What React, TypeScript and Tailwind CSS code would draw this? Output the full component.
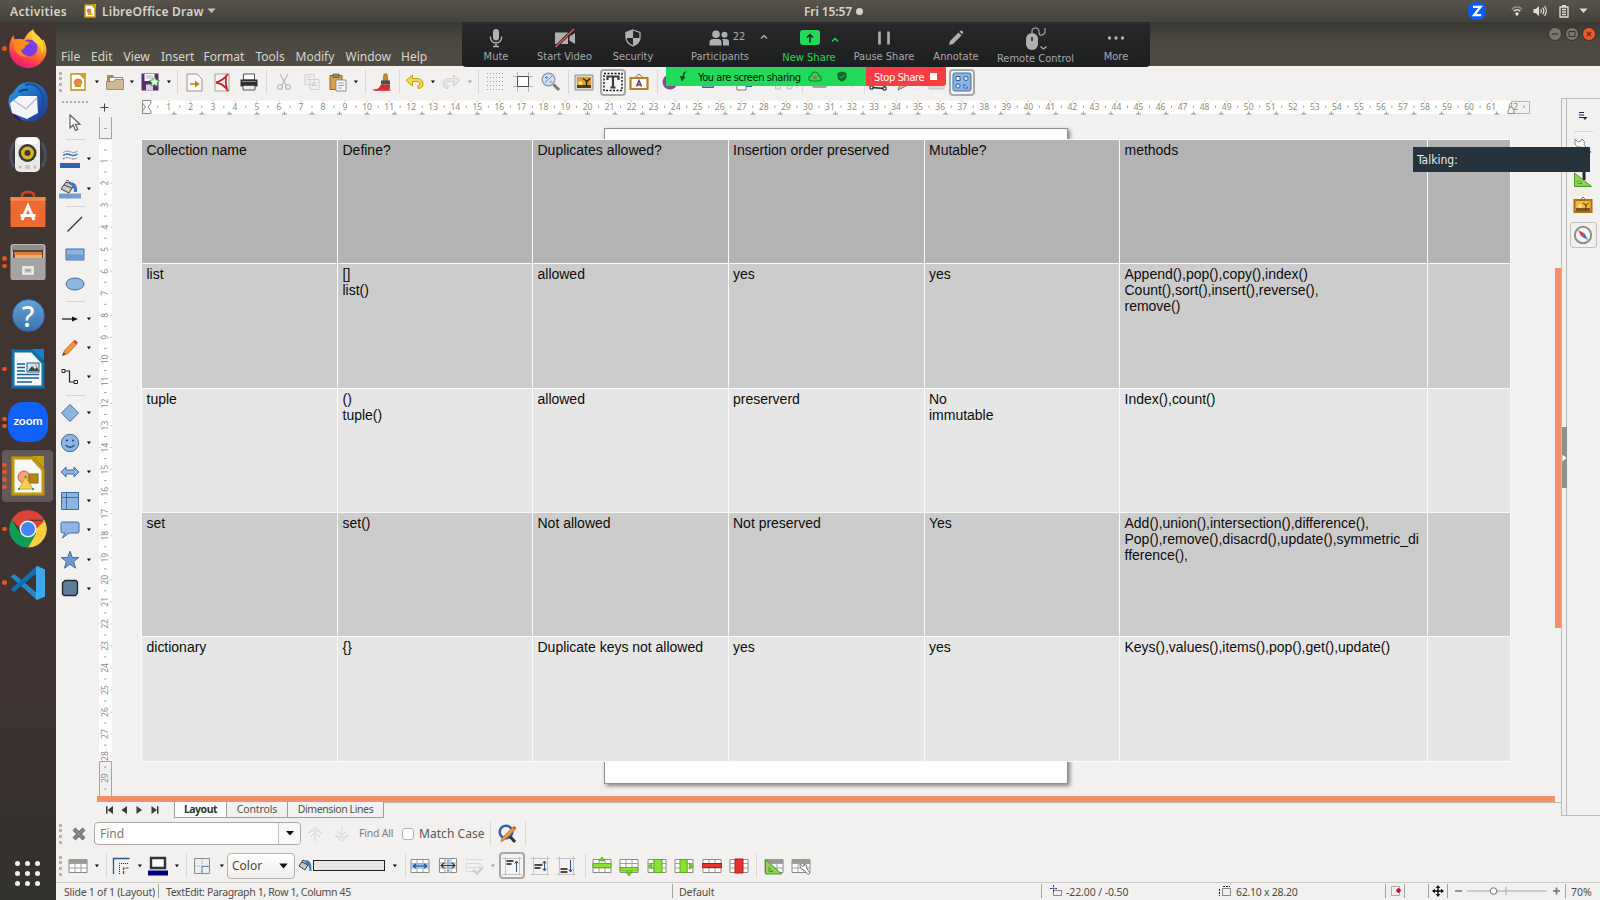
import type { ReactNode } from "react";

const UI = "font-['Noto_Sans',sans-serif]";
const DJ = "font-['DejaVu_Sans_Condensed','DejaVu_Sans',sans-serif]";

type IconProps = { w?: number; h?: number; vb?: string; children: ReactNode; className?: string };
function Ico({ w = 20, h = 20, vb, children, className = "" }: IconProps) {
  return (
    <svg width={w} height={h} viewBox={vb ?? `0 0 ${w} ${h}`} fill="none" className={`block shrink-0 ${className}`}>
      {children}
    </svg>
  );
}

function Slot({ w, children }: { w: string; children?: ReactNode }) {
  return <div className={`flex h-full shrink-0 items-center justify-center ${w}`}>{children}</div>;
}

function Caret({ c = "#111" }: { c?: string }) {
  return (
    <Ico w={6} h={4}>
      <path d="M0.8 0.6h4.2L2.9 3.2z" fill={c} />
    </Ico>
  );
}

function Sep({ h = "h-6" }: { h?: string }) {
  return <div className={`w-px shrink-0 bg-[#dbd9d6] ${h}`} />;
}

function Handle() {
  return <div className="h-5 w-0 border-l-[3px] border-dotted border-[#b5b3b0]" />;
}

/* ---------- top panel ---------- */

function TopPanel() {
  return (
    <header className={`flex h-[22px] shrink-0 items-center bg-linear-to-b from-[#58544c] to-[#42413b] text-[12px] font-semibold text-[#d8d4cb] ${UI}`}>
      <span className="ml-[10px] w-[74px] pt-px tracking-[0.35px]">Activities</span>
      <Ico w={12} h={14}>
        <path d="M1 1h7l3 3v9H1z" fill="#fff" stroke="#c9a000" strokeWidth="1.4" />
        <path d="M8 0h4v4z" fill="#d7ac00" />
        <circle cx="5" cy="7" r="2.4" fill="#e5794a" />
        <path d="M3 11l3-4 3 4z" fill="#d0a62a" />
      </Ico>
      <span className="ml-[6px] w-[103px] pt-px whitespace-nowrap tracking-[0.22px]">LibreOffice Draw</span>
      <Ico w={10} h={6} className="ml-[2px]">
        <path d="M0.5 0.5h8L4.5 5z" fill="#c8c5bd" />
      </Ico>
      <div className="ml-[587px] w-[51px] pt-px tracking-[-0.1px] whitespace-nowrap">Fri 15:57</div>
      <span className="ml-[1px] h-[7px] w-[7px] rounded-full bg-[#d5d2ca]" />
      <div className="ml-auto flex items-center">
        <div className="flex h-[18px] w-[18px] items-center justify-center rounded-[8px] bg-[#0b5cff]">
          <Ico w={12} h={12}>
            <path d="M2 1.8h7.6L3 10.2h7.2" stroke="#fff" strokeWidth="2.2" />
          </Ico>
        </div>
        <Ico w={12} h={12} className="ml-[25px]">
          <path d="M0.8 4.2a7.4 7.4 0 0 1 10.4 0" stroke="#928f88" strokeWidth="1.5" />
          <path d="M2.6 6.2a4.8 4.8 0 0 1 6.8 0" stroke="#dfdbd2" strokeWidth="1.4" />
          <path d="M4 8.2a3 3 0 0 1 4 0L6 11.6z" fill="#dfdbd2" />
        </Ico>
        <Ico w={15} h={12} className="ml-[10px]">
          <path d="M0.5 4h2.2L6 1v10L2.7 8H0.5z" fill="#dfdbd2" />
          <path d="M7.6 4q1.4 2 0 4M9.6 2.6q2.4 3.4 0 6.8M11.6 1.2q3.4 4.8 0 9.6" stroke="#dfdbd2" strokeWidth="1.2" />
        </Ico>
        <Ico w={10} h={14} className="ml-[11px]">
          <path d="M3 1.8h4M1 3h8v10H1z" stroke="#dfdbd2" strokeWidth="1.4" />
          <path d="M3 5.5h4M3 8h4M3 10.5h4" stroke="#dfdbd2" strokeWidth="1.4" />
        </Ico>
        <Ico w={9} h={6} className="ml-[10px] mr-[12px]">
          <path d="M0.5 0.5h8L4.5 5z" fill="#dfdbd2" />
        </Ico>
      </div>
    </header>
  );
}

/* ---------- dock ---------- */

const Firefox = (
  <Ico w={40} h={40}>
    <defs>
      <linearGradient id="ff" x1="0.8" y1="0" x2="0.3" y2="1">
        <stop offset="0" stopColor="#ffe23e" />
        <stop offset="0.4" stopColor="#ff9b24" />
        <stop offset="0.75" stopColor="#ff3c4a" />
        <stop offset="1" stopColor="#e31587" />
      </linearGradient>
    </defs>
    <path d="M25 0.5c1 4 6 6 9 11l1.5-1c4 8 4 14 0 20A18.5 18.5 0 0 1 1.5 23C0.5 17 2 11 5.5 6c0 2 0.5 3.5 1.5 4.5 3-1 6-0.5 9 0 2-4 5-8 9-10z" fill="url(#ff)" />
    <circle cx="21" cy="19" r="8.5" fill="#7a3ee0" />
    <path d="M6 11c4-2 8-1 11 1 2 1 4 1 5 1-1 2-4 3-5 4 0 3-2 3-4 4 1 4 5 6 8 6-9 3-17-4-15-16z" fill="#ff8a1f" />
    <path d="M25 0.5c1 4 6 6 9 11 2 5 2 10 0 14 0-6-3-11-8-13-3-3-3-8-1-12z" fill="#ffd23c" />
  </Ico>
);

const Thunderbird = (
  <Ico w={42} h={42}>
    <defs>
      <linearGradient id="tb" x1="0" y1="0" x2="1" y2="1">
        <stop offset="0" stopColor="#2fa4ea" />
        <stop offset="0.55" stopColor="#1c62b8" />
        <stop offset="1" stopColor="#2a2f86" />
      </linearGradient>
    </defs>
    <path d="M14 3c10-4 20-1 25 8 4 10 2 20-5 26-8 6-20 4-27-3C1 28 0 20 3 14c2-1 3-2 4-4 2-3 4-5 7-7z" fill="url(#tb)" />
    <path d="M3 22l9-7 18 0 1 17-11 6L5 32z" fill="#f4f5f8" />
    <path d="M6 19l13 9 11-11" stroke="#b4bac6" strokeWidth="1.3" />
    <path d="M6 33c3 1 6 3 9 7-5-1-8-4-9-7z" fill="#3a1160" />
    <path d="M18 4c7-2 12 1 15 5 4 6 4 14 1 22" stroke="#1a4c9c" strokeWidth="2" />
    <path d="M12 11q4-3 9-2" stroke="#173f86" strokeWidth="2" />
  </Ico>
);

const Rhythmbox = (
  <Ico w={42} h={40}>
    <path d="M7 8Q0 20 7 32M35 8q7 12 0 24" stroke="#4b566e" strokeWidth="3" opacity=".8" />
    <rect x="8" y="2" width="25" height="35" rx="5" fill="#e9e9e7" />
    <rect x="10" y="3" width="21" height="6" rx="3" fill="#fff" />
    <circle cx="20.5" cy="18" r="9" fill="#3a3a38" />
    <circle cx="20.5" cy="18" r="6.5" fill="#d8b520" />
    <circle cx="20.5" cy="18" r="3" fill="#3a3a38" />
    <rect x="18" y="30" width="5" height="4" rx="1" fill="#c9c9c7" />
    <circle cx="13" cy="32" r="1.5" fill="#bbb" />
    <circle cx="28" cy="32" r="1.5" fill="#bbb" />
  </Ico>
);

const Software = (
  <Ico w={36} h={38}>
    <path d="M12 10V6q0-4 6-4t6 4v4" stroke="#d5431a" strokeWidth="2.4" />
    <path d="M0.5 7h35v30h-35z" fill="#ee6a33" />
    <path d="M0.5 7h35v4h-35z" fill="#f68355" />
    <path d="M12 30l6-14 6 14M10.5 25.5h15" stroke="#fff" strokeWidth="3" />
  </Ico>
);

const Files = (
  <Ico w={36} h={38}>
    <rect x="0.5" y="1" width="35" height="36" rx="3" fill="#b9b8b6" />
    <rect x="2" y="2" width="32" height="7" rx="2" fill="#8f8e8b" />
    <rect x="3" y="7" width="30" height="9" fill="#4a4744" />
    <path d="M4 9h28v3H4z" fill="#e8792c" />
    <path d="M5 12h27v4H5z" fill="#f3b26b" />
    <path d="M1 15h34v20q0 2-2 2H3q-2 0-2-2z" fill="#a5a4a2" />
    <rect x="13" y="24" width="10" height="7" fill="#d5d4d2" stroke="#f3f3f3" strokeWidth="1.5" />
    <rect x="15.5" y="26.5" width="5" height="2" fill="#999" />
  </Ico>
);

const HelpIcon = (
  <div className="flex h-[33px] w-[33px] items-center justify-center rounded-full border border-[#2f6ba5] bg-linear-to-b from-[#66a3da] to-[#3873ad] font-['Noto_Sans',sans-serif] text-[28px] leading-none font-medium text-white">
    ?
  </div>
);

const Writer = (
  <Ico w={34} h={40}>
    <path d="M2 2h19l11 12v24H2z" fill="#f7f7f7" stroke="#0d71ab" strokeWidth="3" />
    <path d="M21 0h12v12z" fill="#0e85c8" />
    <path d="M6 15h8M6 18.5h8M6 22h8M6 25.5h22M6 29h22M6 33h15" stroke="#14639c" strokeWidth="1.6" />
    <rect x="16" y="14" width="12" height="9" fill="#cfe9fb" stroke="#14639c" />
    <path d="M17 22l4-5 3 3 2-2 2 4z" fill="#3c4a3a" />
    <circle cx="25" cy="16.5" r="1.3" fill="#f2b632" />
  </Ico>
);

const ZoomIcon = (
  <div className="flex h-10 w-10 items-center justify-center rounded-[15px] bg-[#1060fa] pb-[2px] font-['Lato',sans-serif] text-[12px] font-bold text-white">
    zoom
  </div>
);

const DrawIcon = (
  <Ico w={34} h={40}>
    <path d="M2 2h19l11 12v24H2z" fill="#f7f7f7" stroke="#c19a0b" strokeWidth="3" />
    <path d="M21 0h12v12z" fill="#c79e00" />
    <circle cx="13" cy="21" r="6" fill="#f2a27c" stroke="#c9643a" />
    <rect x="18" y="18" width="9" height="9" fill="#b08a18" stroke="#86690c" />
    <path d="M8 33l6.5-12L22 33z" fill="#f6cf57" stroke="#d0a62a" />
    <path d="M7 32h2v2H7zM21 32h2v2h-2zM13.5 20h2v2h-2z" fill="#2fae2f" />
  </Ico>
);

const Chrome = (
  <Ico w={38} h={38}>
    <path d="M19 19L2.8 9.7A18.6 18.6 0 0 1 35.2 9.7H19z" fill="#db4437" />
    <path d="M19 19L35.2 9.7A18.6 18.6 0 0 1 19 37.6L27 23z" fill="#ffcd40" />
    <path d="M19 19L27 23.6 19 37.6A18.6 18.6 0 0 1 2.8 9.7L11 23.6z" fill="#0f9d58" />
    <path d="M2.8 9.7L19 10.7H35.6L27 19H11z" fill="#db4437" />
    <circle cx="19" cy="19" r="8.5" fill="#f1f1f1" />
    <circle cx="19" cy="19" r="7" fill="#4285f4" />
  </Ico>
);

const VSCode = (
  <Ico w={36} h={36}>
    <path d="M0.5 11.5L4 9l23 19v7z" fill="#2489ca" />
    <path d="M0.5 24.5L4 27 27 8V1z" fill="#1070b3" />
    <path d="M27 1l8 3.500v27L27 35l-1-1V2z" fill="#3ca9ec" />
    <path d="M26 10v16L16 18z" fill="#3f3433" />
  </Ico>
);

const dock: { icon: ReactNode; dots: number; active?: boolean }[] = [
  { icon: Firefox, dots: 1 },
  { icon: Thunderbird, dots: 0 },
  { icon: Rhythmbox, dots: 0 },
  { icon: Software, dots: 0 },
  { icon: Files, dots: 2 },
  { icon: HelpIcon, dots: 0 },
  { icon: Writer, dots: 1 },
  { icon: ZoomIcon, dots: 2 },
  { icon: DrawIcon, dots: 4, active: true },
  { icon: Chrome, dots: 1 },
  { icon: VSCode, dots: 1 },
];

function Dock() {
  return (
    <aside className="flex w-14 shrink-0 flex-col bg-linear-to-b from-[#413632] via-[#3f3331] via-75% to-[#33322d]">
      {dock.map((d, i) => (
        <div key={i} className="flex h-[53.4px] shrink-0 items-center pl-[2px]">
          <div className={`flex h-[52px] w-[51px] items-center rounded-[4px] ${d.active ? "bg-[#64595a]" : ""}`}>
            <div className="flex w-[5px] flex-col items-center gap-[3px]">
              {Array.from({ length: d.dots }, (_, k) => (
                <span key={k} className="h-[4.4px] w-[4.4px] rounded-full bg-[#e95420]" />
              ))}
            </div>
            <div className="flex w-[42px] justify-center">{d.icon}</div>
          </div>
        </div>
      ))}
      <div className="mt-auto mb-[14px] ml-[15px] grid w-[25px] grid-cols-3 gap-[5px]">
        {Array.from({ length: 9 }, (_, k) => (
          <span key={k} className="h-[5px] w-[5px] rounded-full bg-[#f3f3f1]" />
        ))}
      </div>
    </aside>
  );
}

/* ---------- window chrome ---------- */

function MenuBar() {
  return (
    <div className="flex h-11 shrink-0 bg-linear-to-b from-[#393833] via-[#4b4841] via-45% to-[#504c44]">
      <nav className={`mt-[26px] flex h-[18px] items-center pl-[5px] text-[12px] text-[#dad6cd] ${UI}`}>
        <span className="w-[30px]">File</span>
        <span className="w-[32.5px]">Edit</span>
        <span className="w-[37.5px]">View</span>
        <span className="w-[42.5px]">Insert</span>
        <span className="w-[52px]">Format</span>
        <span className="w-[40px]">Tools</span>
        <span className="w-[50px]">Modify</span>
        <span className="w-[55.5px]">Window</span>
        <span>Help</span>
      </nav>
      <div className="mt-[5px] mr-[4px] ml-auto flex h-[14px] gap-[3px]">
        <Ico w={14} h={14}>
          <circle cx="7" cy="7" r="6.5" fill="#79766e" stroke="#35332e" />
          <path d="M4 7h6" stroke="#35332e" strokeWidth="1.2" />
        </Ico>
        <Ico w={14} h={14}>
          <circle cx="7" cy="7" r="6.5" fill="#79766e" stroke="#35332e" />
          <path d="M4 4.5h6v5H4z" stroke="#35332e" />
        </Ico>
        <Ico w={14} h={14}>
          <circle cx="7" cy="7" r="6.5" fill="#ee5a2b" stroke="#4a2a1c" />
          <path d="M4.8 4.8l4.4 4.4M9.2 4.8L4.8 9.2" stroke="#5a2410" strokeWidth="1.2" />
        </Ico>
      </div>
    </div>
  );
}

function ToggleBox({ children }: { children: ReactNode }) {
  return (
    <div className="flex h-[27px] w-[26px] shrink-0 items-center justify-center rounded-[4px] border-2 border-[#aaa8a5] bg-[#f6f5f4]">
      {children}
    </div>
  );
}

const disabled = "#d2d0cd";

function Toolbar() {
  return (
    <div className="flex h-8 shrink-0 items-center bg-[#f2f1f0]">
      <Slot w="w-2"><Handle /></Slot>
      <Slot w="w-7">
        <Ico w={16} h={18}>
          <path d="M1 1h9l5 5v11H1z" fill="#fff" stroke="#b98e00" strokeWidth="1.3" />
          <path d="M10 0h6v6z" fill="#cda200" />
          <circle cx="8" cy="9.5" r="3.6" fill="#e8834a" stroke="#b9612d" strokeWidth=".7" />
          <path d="M4 14l7-6v6z" fill="#c79e25" />
        </Ico>
      </Slot>
      <Slot w="w-2.5"><Caret /></Slot>
      <Slot w="w-[25px]">
        <Ico w={18} h={18}>
          <path d="M1 2h6l1 2h9v12H1z" fill="#a08c6c" />
          <path d="M4 5h12v5H4z" fill="#f5f5f5" />
          <path d="M0.5 8.5h7l1.5-2h8.5v10h-17z" fill="#cdb995" stroke="#92805f" strokeWidth=".8" />
        </Ico>
      </Slot>
      <Slot w="w-2.5"><Caret /></Slot>
      <Slot w="w-[27px]">
        <Ico w={20} h={18}>
          <path d="M0.5 0.5h17v17h-17z" fill="#5b2f6f" />
          <path d="M3.5 1h10v7h-10z" fill="#fff" />
          <path d="M5 3h7M5 5h7" stroke="#aaa" />
          <path d="M5 11.5h7v6H5z" fill="#d8d3dc" />
          <path d="M13.5 4l1.6 2.9 3.3.6-2.3 2.3.5 3.3-3.1-1.4-3 1.4.4-3.300-2.300-2.300 3.300-.6z" fill="#e9fbe6" stroke="#35b24a" />
        </Ico>
      </Slot>
      <Slot w="w-2.5"><Caret /></Slot>
      <Slot w="w-1.5"><Sep /></Slot>
      <Slot w="w-7">
        <Ico w={17} h={19}>
          <path d="M1 1h10l5 5v12H1z" fill="#f7f7f6" stroke="#989693" />
          <path d="M4 10.2h5V7.500l4.500 3.500L9 14.500v-2.700H4z" fill="#c17d11" />
        </Ico>
      </Slot>
      <Slot w="w-[27px]">
        <Ico w={16} h={19}>
          <path d="M1 1h14v17H1z" fill="#f7f7f6" stroke="#a5a3a0" />
          <path d="M14 1Q10 7 2 9.5 10 11 14 18M12 3q-1 7 1 13" stroke="#cc1f2b" strokeWidth="1.8" />
        </Ico>
      </Slot>
      <Slot w="w-7">
        <Ico w={18} h={18}>
          <path d="M3.5 1h11v6h-11z" fill="#fff" stroke="#555" />
          <path d="M0.5 6.5h17v7h-17z" fill="#2e3030" />
          <path d="M3 12.5h12v4.5H3z" fill="#ececec" stroke="#555" />
          <path d="M2 8.5h14" stroke="#8a8a8a" />
        </Ico>
      </Slot>
      <Slot w="w-[7px]"><Sep /></Slot>
      <Slot w="w-7">
        <Ico w={16} h={18}>
          <path d="M4 1l6 11M12 1L6 12" stroke="#bdbbb8" strokeWidth="1.3" />
          <circle cx="4" cy="14" r="2.4" stroke="#bdbbb8" strokeWidth="1.4" />
          <circle cx="12" cy="14" r="2.4" stroke="#bdbbb8" strokeWidth="1.4" />
        </Ico>
      </Slot>
      <Slot w="w-[27px]">
        <Ico w={16} h={18}>
          <path d="M1 1.5h9v10H1zM6 6.5h9v10H6z" fill="#f2f1f0" stroke={disabled} />
          <path d="M3 4h5M3 6.5h5M8 10h5M8 12.5h5" stroke={disabled} />
        </Ico>
      </Slot>
      <Slot w="w-[26px]">
        <Ico w={18} h={19}>
          <path d="M1 2.5h12v14H1z" fill="#d9a04a" stroke="#9a6518" />
          <path d="M4 1h6v3.5H4z" fill="#888a85" stroke="#555" strokeWidth=".7" />
          <path d="M7 7h10v11H7z" fill="#fafafa" stroke="#8b8b88" />
          <path d="M9 10h6M9 12.5h6M9 15h4" stroke="#9a9a98" />
        </Ico>
      </Slot>
      <Slot w="w-2.5"><Caret /></Slot>
      <Slot w="w-2"><Sep /></Slot>
      <Slot w="w-[26px]">
        <Ico w={19} h={19}>
          <path d="M11 1h3l1 7h-5z" fill="#c58a35" stroke="#8f5902" strokeWidth=".6" />
          <path d="M8 7.5h9v4H8z" fill="#4d4d4b" />
          <path d="M8 11.5h9v3l-1 3H1q5-1.5 7-6z" fill="#cf2c2c" />
          <path d="M0.5 17h17" stroke="#e03a3a" strokeWidth="1.6" />
        </Ico>
      </Slot>
      <Slot w="w-[9px]"><Sep /></Slot>
      <Slot w="w-6">
        <Ico w={19} h={16} className="-ml-1">
          <path d="M1 6.5L7.5 1v3.5H12c4 0 6 2.5 6 5.5s-2 4.500-5 4.500v-3c1.500 0 2-.7 2-1.700 0-1.300-1-2.300-3-2.300H7.500V12z" fill="#f0d65a" stroke="#c4a000" />
        </Ico>
      </Slot>
      <Slot w="w-2.5"><Caret /></Slot>
      <Slot w="w-[27px]">
        <Ico w={19} h={16}>
          <path d="M18 6.5L11.5 1v3.5H7c-4 0-6 2.5-6 5.5s2 4.500 5 4.500v-3c-1.500 0-2-.7-2-1.700 0-1.300 1-2.300 3-2.300h4.500V12z" fill="#e6e5e3" stroke="#d3d1ce" />
        </Ico>
      </Slot>
      <Slot w="w-2.5"><Caret c="#a5a3a0" /></Slot>
      <Slot w="w-[7px]"><Sep /></Slot>
      <Slot w="w-[27px]">
        <Ico w={20} h={20}>
          {[1, 5, 9, 13, 17].map((y) => (
            <path key={y} d={`M1 ${y + 0.5}h18`} stroke="#a3a19e" strokeDasharray="1 2" />
          ))}
        </Ico>
      </Slot>
      <Slot w="w-7">
        <Ico w={20} h={20}>
          <path d="M4.5 0v20M15.5 0v20M0 4.5h20M0 14.5h20" stroke="#a9bbd0" />
          <path d="M4.5 4.5h11v10h-11z" fill="#fff" stroke="#4c4c4c" />
        </Ico>
      </Slot>
      <Slot w="w-7">
        <Ico w={20} h={20}>
          <circle cx="7.5" cy="7.5" r="6.3" fill="#d5e1ef" stroke="#8c9db4" strokeWidth="1.4" />
          <path d="M4 10.5L11 4M5.5 4v3M4 5.5h3M8.5 10h3" stroke="#6b89b0" />
          <path d="M12.5 12.5l5.5 5.5" stroke="#7a7977" strokeWidth="3" />
        </Ico>
      </Slot>
      <Slot w="w-[7px]"><Sep /></Slot>
      <Slot w="w-[27px]">
        <Ico w={20} h={17} className="-ml-1">
          <path d="M1 1h18v15H1z" fill="#d8d7d4" stroke="#8f8e8b" />
          <path d="M3 3h14v11H3z" fill="#e59a2e" />
          <path d="M3 11h14v3H3z" fill="#5a3a18" />
          <path d="M12.5 13V7L9 4.500M12.500 8L16 4.500" stroke="#2a1c0c" strokeWidth="1.4" />
          <circle cx="6.5" cy="9" r="2" fill="#ffe98a" />
        </Ico>
      </Slot>
      <Slot w="w-7">
        <ToggleBox>
          <Ico w={20} h={20}>
            <path d="M1 1.5h18v17H1z" stroke="#111" strokeWidth="1.4" strokeDasharray="2 1.5" />
            <path d="M4.5 8V4.5h11V8M10 4.5V15.5M7.5 15.5h5" stroke="#3c3c3a" strokeWidth="2.2" />
          </Ico>
        </ToggleBox>
      </Slot>
      <Slot w="w-[27px]">
        <Ico w={20} h={18} className="-ml-1">
          <path d="M6 4.5l4-3.5 4 3.5" stroke="#777" />
          <path d="M1.5 5h17v11h-17z" fill="#fbfaf7" stroke="#c07f1e" strokeWidth="2.2" />
          <path d="M7.5 13.5l2.5-6 2.5 6M8.2 11.8h3.6" stroke="#5c3566" strokeWidth="1.4" />
        </Ico>
      </Slot>
      <Slot w="w-1.5"><Sep /></Slot>
      <Slot w="w-[23px]">
        <Ico w={18} h={18} className="-ml-1">
          <circle cx="9" cy="9" r="7.5" fill="#8a4a96" />
        </Ico>
      </Slot>
      <Slot w="w-[50px]">
        <Ico w={12} h={14}><path d="M0.5 2h11v10.5H0.5z" fill="#7ba3d6" stroke="#3465a4" /></Ico>
      </Slot>
      <Slot w="w-[22px]">
        <Ico w={17} h={18}>
          <path d="M4 1h12v13H4z" fill="#3465a4" />
          <path d="M1 7h9v10H1z" fill="#fff" stroke="#777" />
        </Ico>
      </Slot>
      <Slot w="w-[43px] pl-[14px]">
        <Ico w={18} h={16}><path d="M0.5 4h5v11h-5zM12 4h5v11h-5z" fill="#e5e4e2" stroke="#c3c1be" /></Ico>
      </Slot>
      <Slot w="w-[9px]"><Sep /></Slot>
      <Slot w="w-[25px]">
        <Ico w={16} h={14}><rect y="2" width="15" height="11" rx="2" fill="#a5a3a0" /></Ico>
      </Slot>
      <Slot w="w-[28px] pl-[12px]">
        <Ico w={10} h={16}><path d="M1 8h8l-4 6z" fill="#dddbd8" /></Ico>
      </Slot>
      <Slot w="w-[8px]"><Sep /></Slot>
      <Slot w="w-[20px]">
        <Ico w={18} h={20}>
          <path d="M2 15.5l14 1M3 3l-1 13M14 4l2 13" stroke="#222" strokeWidth="1.3" />
          <path d="M1 14h3v3H1zM14 15h3v3h-3z" fill="#fff" stroke="#111" />
        </Ico>
      </Slot>
      <Slot w="w-[30px]">
        <Ico w={12} h={20}><path d="M1 18L4 10l7-4v7z" fill="#e2c35a" stroke="#777" /></Ico>
      </Slot>
      <Slot w="w-[31px] pl-[5px]">
        <Ico w={17} h={18}><path d="M1 3h15v13H1z" fill="#dcdbd9" stroke="#c3c1be" /></Ico>
      </Slot>
      <ToggleBox>
        <Ico w={20} h={20}>
          <rect x="1" y="1" width="18" height="18" rx="2" fill="#8cb3e2" stroke="#3f6fae" />
          <path d="M4 4.5h4v4H4zM12 12l4 4h-4z" fill="#e8f0fa" stroke="#2f5f9f" />
          <circle cx="14" cy="6.5" r="2.1" fill="#dce8f6" stroke="#2f5f9f" />
          <circle cx="6" cy="14" r="2.1" fill="#dce8f6" stroke="#2f5f9f" />
        </Ico>
      </ToggleBox>
    </div>
  );
}

/* ---------- drawing tools ---------- */

function Tool({ h = "h-[29px]", caret = true, children }: { h?: string; caret?: boolean; children: ReactNode }) {
  return (
    <div className={`flex w-full shrink-0 items-center ${h}`}>
      {caret ? (
        <>
          <div className="flex w-7 justify-center">{children}</div>
          <div className="flex w-[9px] justify-center"><Caret /></div>
        </>
      ) : (
        <div className="flex w-[38px] justify-center">{children}</div>
      )}
    </div>
  );
}

const B1 = "#8fb4e0";
const B2 = "#3f6ca8";

function DrawTools() {
  const rule = "ml-[10px] h-px w-[19px] shrink-0 bg-[#d5d3d0]";
  return (
    <div className="flex w-[41px] shrink-0 flex-col bg-[#f2f1f0]">
      <div className="mt-[3px] ml-[6px] mb-[5px] w-[26px] border-t-[2px] border-dotted border-[#b0aeab]" />
      <Tool h="h-[31px]" caret={false}>
        <Ico w={14} h={18} className="-mt-px"><path d="M2 1v13l3.200-3 2.300 5.500 2.300-1-2.400-5.200H12z" fill="#fff" stroke="#555" strokeWidth="1.1" /></Ico>
      </Tool>
      <div className={rule} />
      <div className="h-1 shrink-0" />
      <Tool h="h-[30px]">
        <Ico w={20} h={20}>
          <path d="M3 3.5q4-2.500 7.500-.7T17.500 2" stroke="#8fabd0" strokeWidth="1.2" />
          <path d="M3 6.5q4-2.500 7.500-.7T17.500 5" stroke="#3465a4" strokeWidth="1.4" />
          <path d="M3 10q4-2.500 7.500-.7T17.500 8.500" stroke="#3465a4" strokeDasharray="2 1" />
          <path d="M0 14h20v5H0z" fill="#2f62a8" />
        </Ico>
      </Tool>
      <Tool h="h-[30px]">
        <Ico w={22} h={20}>
          <path d="M7 3l8 3-5 8-8-4z" fill="#c9cac8" stroke="#3b3b3b" />
          <path d="M5 6l8 3M7 2q3-2 4 3" stroke="#444" />
          <path d="M11 3q8 0 7 10h-3q0-6-5-8z" fill="#3a7cc0" />
          <path d="M0 14.5h22v5H0z" fill="#729fcf" />
        </Ico>
      </Tool>
      <div className={`${rule} mt-[2px]`} />
      <div className="h-[2px] shrink-0" />
      <Tool h="h-[30px]" caret={false}>
        <Ico w={18} h={18}><path d="M1.5 16.5L16 2" stroke="#333" strokeWidth="1.2" /></Ico>
      </Tool>
      <Tool h="h-[30px]" caret={false}>
        <Ico w={20} h={14} className="mt-px"><path d="M1 1h18v11H1z" fill={B1} stroke={B2} /><path d="M1.500 6.500h17v5h-17z" fill="#6d9ad1" /></Ico>
      </Tool>
      <Tool caret={false}>
        <Ico w={20} h={14}><ellipse cx="10" cy="7" rx="9" ry="6" fill={B1} stroke={B2} /></Ico>
      </Tool>
      <div className={`${rule} mt-[3px]`} />
      <div className="h-[2px] shrink-0" />
      <Tool>
        <Ico w={18} h={8}><path d="M1 4h12" stroke="#111" strokeWidth="1.2" /><path d="M11 1.500L17 4l-6 2.500z" fill="#111" /></Ico>
      </Tool>
      <Tool>
        <Ico w={18} h={18}>
          <path d="M1.5 16.5l2-5L12 2.5l3.5 3L7 14.5z" fill="#f0953a" stroke="#a85a12" strokeWidth=".7" />
          <path d="M12 2.5L14 0.8l3 2.9-1.5 1.8z" fill="#e0434a" />
          <path d="M1.5 16.5l1.2-3 2 1.8z" fill="#333" />
        </Ico>
      </Tool>
      <Tool>
        <Ico w={18} h={18}>
          <path d="M4 3h4.5v11H13" stroke="#222" strokeWidth="1.2" />
          <path d="M1 1.5h3v3H1zM13 12.5h3.5v3H13z" fill="#fff" stroke="#222" />
        </Ico>
      </Tool>
      <div className={`${rule} mt-[4px]`} />
      <div className="h-[2px] shrink-0" />
      <Tool h="h-[30px]">
        <Ico w={20} h={20}><path d="M10 1.5L18.5 10 10 18.5 1.5 10z" fill={B1} stroke={B2} /></Ico>
      </Tool>
      <Tool>
        <Ico w={20} h={20}>
          <circle cx="10" cy="10" r="8.7" fill={B1} stroke={B2} />
          <circle cx="7" cy="7.5" r="1.1" fill="#274b80" />
          <circle cx="13" cy="7.5" r="1.1" fill="#274b80" />
          <path d="M5.5 12q4.5 4.5 9 0" stroke="#274b80" strokeWidth="1.2" />
        </Ico>
      </Tool>
      <Tool>
        <Ico w={20} h={12}><path d="M1 6l5-5v3h8V1l5 5-5 5V8H6v3z" fill={B1} stroke={B2} /></Ico>
      </Tool>
      <Tool>
        <Ico w={20} h={20}>
          <path d="M1.5 1.5h17v17h-17z" fill={B1} stroke={B2} />
          <path d="M6.5 1.5v17M1.5 6.5h17" stroke={B2} />
        </Ico>
      </Tool>
      <Tool h="h-[30px]">
        <Ico w={20} h={18}><path d="M2.5 1h15q1.5 0 1.5 1.5v8q0 1.5-1.5 1.5H9l-6.5 5L5 12H2.5Q1 12 1 10.5v-8Q1 1 2.5 1z" fill={B1} stroke={B2} /></Ico>
      </Tool>
      <Tool>
        <Ico w={20} h={20}><path d="M10 1.2l2.3 6.4h6.5l-5.2 4 1.9 6.600L10 14.300l-5.500 3.900 1.900-6.600-5.200-4h6.500z" fill="#6d9ad1" stroke={B2} /></Ico>
      </Tool>
      <Tool>
        <Ico w={18} h={18} className="-mt-px">
          <path d="M4 1.5h11l1.5 1.5v11l-2 2.5H3L1.500 15V4z" fill="#5e7c9c" stroke="#1e2833" strokeWidth="1.3" />
        </Ico>
      </Tool>
    </div>
  );
}

/* ---------- rulers ---------- */

const UNIT = 22.04;

function HRuler() {
  const ox = 49.7;
  return (
    <div className="flex h-[18px] shrink-0">
      <Ico w={1464} h={18} className="-mt-px">
        <path d="M3.5 10.5h8M7.5 6.5v8" stroke="#444" />
        <path d="M50 3.5h1364v13.5H50z" fill="#fff" />
        {Array.from({ length: 61 }, (_, i) => {
          const x = ox + (i + 1) * UNIT;
          return (
            <g key={i}>
              <text x={x} y="12.8" textAnchor="middle" fontSize="8.5" fill="#8c8a85" fontFamily="Noto Sans, sans-serif">
                {i + 1}
              </text>
              <path d={`M${x} 3.5v1.5`} stroke="#b5b3b0" strokeWidth=".8" />
              <path d={`M${x - UNIT / 2} 8.5v2.5`} stroke="#a5a39e" />
            </g>
          );
        })}
        {Array.from({ length: 49 }, (_, i) => {
          const x = ox + (i + 1) * UNIT * 1.25;
          return <path key={i} d={`M${x - 2.5} 17h5M${x} 14.5v2.5`} stroke="#8a8883" strokeWidth=".9" />;
        })}
        <path d="M1414.5 4.5h18v12h-18z" fill="#f2f1f0" stroke="#b5b3b0" />
        <text x={ox + 62 * UNIT} y="12.8" textAnchor="middle" fontSize="8.5" fill="#8c8a85" fontFamily="Noto Sans, sans-serif">62</text>
        <path d="M1427 8.5v2.5" stroke="#8c8a85" />
        <path d="M1411 16.5v-3l3-4.5 3 4.5v3z" fill="#f7f7f6" stroke="#8c8a85" />
        <path d="M45.5 3.5h8.5v2.5l-3 4 3 4v2.5h-8.5V14l3-4-3-4zM45.5 3.5v13" fill="#f7f7f6" stroke="#8c8a85" />
      </Ico>
    </div>
  );
}

function VRuler() {
  const oy = 23;
  return (
    <Ico w={16} h={680}>
      <path d="M2.5 1v22M14.5 1v22M2.5 22.5h12" stroke="#a5a3a0" />
      <path d="M7 12.5h3" stroke="#a5a39e" />
      <path d="M2 24h13v621H2z" fill="#fff" />
      <path d="M2.5 645.5h12V680M2.5 645.5V680" stroke="#a5a3a0" />
      {Array.from({ length: 29 }, (_, i) => {
        const y = oy + (i + 1) * UNIT;
        return (
          <g key={i}>
            <text transform={`translate(11.3 ${y}) rotate(-90)`} textAnchor="middle" fontSize="8.5" fill="#8c8a85" fontFamily="Noto Sans, sans-serif">
              {i + 1}
            </text>
            <path d={`M2.5 ${y}h1M13.5 ${y}h1`} stroke="#8c8a85" strokeWidth=".8" />
            <path d={`M7 ${y - UNIT / 2}h2.5`} stroke="#a5a39e" />
          </g>
        );
      })}
      <path d={`M7 ${oy + 29.5 * UNIT}h2.5`} stroke="#a5a39e" />
    </Ico>
  );
}

/* ---------- canvas ---------- */

const rows: { bg: string; cells: string[] }[] = [
  { bg: "bg-[#b3b3b3]", cells: ["Collection name", "Define?", "Duplicates allowed?", "Insertion order preserved", "Mutable?", "methods", ""] },
  { bg: "bg-[#cccccc]", cells: ["list", "[]\nlist()", "allowed", "yes", "yes", "Append(),pop(),copy(),index()\nCount(),sort(),insert(),reverse(),\nremove()", ""] },
  { bg: "bg-[#e6e6e6]", cells: ["tuple", "()\ntuple()", "allowed", "preserverd", "No\nimmutable", "Index(),count()", ""] },
  { bg: "bg-[#cccccc]", cells: ["set", "set()", "Not allowed", "Not preserved", "Yes", "Add(),union(),intersection(),difference(),\nPop(),remove(),disacrd(),update(),symmetric_di\nfference(),", ""] },
  { bg: "bg-[#e6e6e6]", cells: ["dictionary", "{}", "Duplicate keys not allowed", "yes", "yes", "Keys(),values(),items(),pop(),get(),update()", ""] },
];

function Canvas() {
  return (
    <div className="relative h-[680px] w-[1448px] shrink-0 overflow-hidden bg-[#f2f1f0]">
      <div className="absolute top-[12px] left-[491px] h-[656px] w-[464px] border border-[#8e8e8c] bg-white shadow-[2px_2px_4px_rgba(0,0,0,0.45)]" />
      <div className="absolute top-[23px] left-[28px] grid grid-cols-[196px_195px_195.5px_196px_195.5px_308px_83px] grid-rows-[124px_125px_124px_124px_125px] border-t border-l border-[#fafafa] font-['Liberation_Sans',Arial,sans-serif] text-[14px] leading-[15.9px] tracking-[-0.01px] text-[#0c0c0c]">
        {rows.flatMap((r, i) =>
          r.cells.map((c, j) => (
            <div key={`${i}-${j}`} className={`border-r border-b border-[#fafafa] pt-[3px] pl-[4.5px] whitespace-pre ${r.bg}`}>
              {c}
            </div>
          )),
        )}
      </div>
      <div className="absolute top-[152px] left-[1442px] h-[360px] w-[6px] bg-[#f38f69]" />
    </div>
  );
}

function PageTabs() {
  return (
    <div className={`flex h-4 shrink-0 text-[10.5px] leading-[14px] text-[#55524c] ${UI}`}>
      <div className="flex w-[77px] items-center pl-[8px]">
        <Ico w={55} h={10} className="-mt-px">
          <path d="M1 1.2h1.5v7.6H1zM8 1v8L2.5 5z" fill="#3c3b38" />
          <path d="M22 1v8l-5.5-4z" fill="#3c3b38" />
          <path d="M31.5 1v8l5.5-4z" fill="#3c3b38" />
          <path d="M46.5 1v8L52 5zM52 1.2h1.5v7.6H52z" fill="#3c3b38" />
        </Ico>
      </div>
      <div className="w-[53px] border border-t-0 border-[#a09e9b] bg-white text-center font-bold tracking-[-0.5px] text-[#33312d]">Layout</div>
      <div className="w-[61px] border-r border-b border-[#a09e9b] text-center tracking-[-0.15px]">Controls</div>
      <div className="w-[96px] border-r border-b border-[#a09e9b] text-center tracking-[-0.4px] whitespace-nowrap">Dimension Lines</div>
      <div className="flex-1 border-t border-[#bdbbb8]" />
    </div>
  );
}

function Sidebar() {
  return (
    <div className="flex w-[39px] shrink-0 border-b border-[#bdbbb8]">
      <div className="flex w-[6px] flex-col border-t border-r border-l border-[#bdbbb8]">
        <div className="mt-[328px] flex h-[61px] w-[5px] items-center bg-[#90908a]">
          <Ico w={5} h={8}><path d="M0.5 0.5l4 3.5-4 3.5z" fill="#fff" /></Ico>
        </div>
      </div>
      <div className="flex flex-1 flex-col items-center border-t border-[#bdbbb8] pr-px">
        <Ico w={10} h={10} className="mt-[12px]">
          <path d="M1 1.5h5M1 4h5M1 6.5h5" stroke="#1f2a44" strokeWidth="1.2" />
          <path d="M4.5 6h5L7 9z" fill="#1f2a44" />
        </Ico>
        <div className="mt-[10px] h-px w-[19px] bg-[#d8d6d3]" />
        <Ico w={20} h={20} className="mt-[5px]">
          <path d="M2 2l3 3 3-1 1-2q4 2 2 6l7 7-2 2-7-7q-5 1-7-3z" fill="#fff" stroke="#888a85" />
        </Ico>
        <Ico w={20} h={24} className="mt-[9px]">
          <path d="M9.5 2h3v12h-3zM14 2h3v4h-3z" fill="#2b2b29" />
          <path d="M1.5 7v13.5h17z" fill="#8fd05c" stroke="#4b9a1f" />
          <path d="M5 14.5v3h4z" fill="#f2f1f0" stroke="#4b9a1f" />
        </Ico>
        <Ico w={20} h={18} className="mt-[6px]">
          <path d="M7 4l3-3 3 3" stroke="#777" />
          <path d="M1.5 4h17v12h-17z" fill="#f0b93e" stroke="#b06f12" strokeWidth="2" />
          <path d="M3 12h14v3H3z" fill="#7c5620" />
          <path d="M13 14V9l-3-2M13 9.500L16 6.500" stroke="#4a3010" />
          <circle cx="7" cy="10" r="1.7" fill="#fff1a5" />
        </Ico>
        <div className="mt-[8px] flex h-[26px] w-[27px] items-center justify-center rounded-[3px] border border-[#c2c0bd]">
          <Ico w={20} h={20}>
            <circle cx="10" cy="10" r="8.2" fill="#f4f4f3" stroke="#8e8e8b" strokeWidth="2" />
            <path d="M5 5l6.5 3.5-3 3z" fill="#d8383c" />
            <path d="M15 15L8.5 11.5l3-3z" fill="#4470b0" />
          </Ico>
        </div>
      </div>
    </div>
  );
}

/* ---------- bottom bars ---------- */

function FindBar() {
  return (
    <div className={`flex h-[31px] shrink-0 items-center text-[#5a5852] ${UI}`}>
      <Slot w="w-2"><Handle /></Slot>
      <Slot w="w-[30px]">
        <Ico w={16} h={16}><path d="M3 3l10 10M13 3L3 13" stroke="#6e6d69" strokeWidth="4" /><path d="M3.5 3.5l9 9M12.5 3.5l-9 9" stroke="#93928e" strokeWidth="1.5" /></Ico>
      </Slot>
      <div className="flex h-[23px] w-[207px] items-center rounded-[4px] border border-[#aaa8a4] bg-white">
        <span className="flex-1 pl-[5px] text-[12px] text-[#7c7a75]">Find</span>
        <div className="flex h-full w-[22px] items-center justify-center rounded-r-[4px] border-l border-[#c5c3c0] bg-[#f8f8f7]">
          <Ico w={8} h={5}><path d="M0 0h8L4 4.5z" fill="#111" /></Ico>
        </div>
      </div>
      <Slot w="w-7"><Ico w={16} h={18}><path d="M1 8l7-6 7 6-7-3zM3 12l5-4 5 4M8 5v12" stroke="#dbd9d6" /></Ico></Slot>
      <Slot w="w-[26px]"><Ico w={16} h={18}><path d="M1 10l7 6 7-6-7 3zM3 6l5 4 5-4M8 13V1" stroke="#dbd9d6" /></Ico></Slot>
      <span className="ml-[4px] w-[43px] text-[10.5px] leading-none tracking-[-0.2px] whitespace-nowrap text-[#807e79]">Find All</span>
      <div className="h-[12px] w-[12px] rounded-[3px] border border-[#b4b2ae] bg-white" />
      <span className="ml-[5px] w-[68px] text-[12px] tracking-[0.05px] whitespace-nowrap">Match Case</span>
      <Slot w="w-[6px]"><Sep /></Slot>
      <Slot w="w-[28px]">
        <Ico w={20} h={20}>
          <circle cx="9" cy="8" r="6.3" stroke="#3f5fa5" strokeWidth="2.6" />
          <path d="M13 12.5l5 5.5" stroke="#333" strokeWidth="3" />
          <path d="M4 17.5l1-3.5L15.5 3.5l2.5 2L7.5 16z" fill="#f09a3e" stroke="#9c5a14" strokeWidth=".6" />
          <path d="M15.5 3.5l1.8-1.5 2.2 2-1.5 1.5z" fill="#e0434a" />
        </Ico>
      </Slot>
      <Slot w="w-[8px]"><Sep /></Slot>
    </div>
  );
}

function TableGrid({ children, head = false }: { children?: ReactNode; head?: boolean }) {
  return (
    <Ico w={20} h={20}>
      <path d="M1 3.5h18v13H1z" fill="#fff" stroke="#8b8a87" />
      <path d="M1 7.5h18M1 12h18M7 3.5v13M13 3.5v13" stroke="#a09f9c" />
      {head && <path d="M1 3h18v4H1z" fill="#9b9a97" />}
      {children}
    </Ico>
  );
}

function AlignIcon({ children }: { children: ReactNode }) {
  return (
    <Ico w={20} h={20}>
      <path d="M3.5 0.5v19M17.5 0.5v19M0.5 2.5h19M0.5 18.5h19" stroke="#c5c3c0" />
      {children}
    </Ico>
  );
}

function TableBar() {
  return (
    <div className="flex h-[33px] shrink-0 items-center">
      <Slot w="w-2"><Handle /></Slot>
      <Slot w="w-7"><TableGrid head /></Slot>
      <Slot w="w-2.5"><Caret /></Slot>
      <Slot w="w-2"><Sep /></Slot>
      <Slot w="w-[25px]">
        <Ico w={20} h={20} className="-ml-1">
          <path d="M2.5 18V2.5h16" stroke="#2c5388" strokeWidth="1.3" />
          <path d="M8.5 18V7.5h9" stroke="#222" strokeDasharray="1 1" />
          <path d="M12.5 18v-6h5" stroke="#444" strokeDasharray="3 1" strokeWidth="1.2" />
        </Ico>
      </Slot>
      <Slot w="w-2.5"><Caret /></Slot>
      <Slot w="w-[27px]">
        <Ico w={20} h={20} className="-ml-0.5">
          <path d="M3 2h14v10H3z" fill="#fbfbfb" stroke="#333" strokeWidth="2.4" />
          <path d="M0 14.5h20v5H0z" fill="#00007f" />
        </Ico>
      </Slot>
      <Slot w="w-2.5"><Caret /></Slot>
      <Slot w="w-[8px]"><Sep /></Slot>
      <Slot w="w-[26px]">
        <Ico w={18} h={18} className="-ml-0.5">
          <path d="M1.5 1.5h15v15h-15z" fill="#eceff2" stroke="#8b8a87" />
          <path d="M9 2v14M2 9h14" stroke="#8ab0a8" strokeDasharray="1 1" />
          <path d="M9 16V9.5h7" stroke="#5c86b8" />
        </Ico>
      </Slot>
      <Slot w="w-[11px]"><Caret /></Slot>
      <div className={`flex h-[26px] w-[68px] items-center justify-between rounded-[4px] border border-[#b5b3af] bg-linear-to-b from-white to-[#efeeec] pr-[6px] pl-[4px] text-[12px] text-[#4c4943] ${UI}`}>
        Color
        <Ico w={9} h={6}><path d="M0.3 0.5h8.4L4.5 5.5z" fill="#111" /></Ico>
      </div>
      <Ico w={15} h={15} className="ml-[3px]">
        <path d="M5 2l6 3-4 7-6-4z" fill="#c9cac8" stroke="#3b3b3b" />
        <path d="M4 4l6 3" stroke="#333" />
        <path d="M8 2q6 0 5.5 11h-2q0-6-4-8z" fill="#3a7cc0" />
      </Ico>
      <div className="h-[11px] w-[72px] border border-[#222] bg-[#e6e6e6]" />
      <Slot w="w-[20px]"><Caret /></Slot>
      <Slot w="w-[0px]"><Sep /></Slot>
      <Slot w="w-[30px]">
        <TableGrid>
          <path d="M1 7.5h18v5H1z" fill="#9fc0e8" />
          <path d="M4 10h12M6 8l-2.5 2L6 12M14 8l2.5 2L14 12" stroke="#1d4f91" strokeWidth="1.2" />
        </TableGrid>
      </Slot>
      <Slot w="w-[26px]">
        <Ico w={20} h={20}>
          <path d="M1.5 2.5h17v14h-17z" fill="#fff" stroke="#8b8a87" />
          <path d="M1.5 7h17M1.5 12h17M7 2.5v14M13 2.5v14" stroke="#a09f9c" />
          <path d="M9 2h2.5v15H9z" fill="#8fb4e0" />
          <path d="M3 9.5h14M6 7L3 9.5 6 12M14 7l3 2.5-3 2.5" stroke="#333" strokeWidth="1.2" />
        </Ico>
      </Slot>
      <Slot w="w-[27px]">
        <Ico w={20} h={20}>
          <path d="M1 3.5h17M1 7.5h14v8H1zM1 11.5h14M7 2v3" stroke="#dcdad7" />
          <path d="M8 14l4 4 6-7" stroke="#cfcdca" strokeWidth="2" />
        </Ico>
      </Slot>
      <Slot w="w-[10px]"><Caret c="#a5a3a0" /></Slot>
      <Slot w="w-[28px]">
        <ToggleBox>
          <AlignIcon>
            <path d="M4.5 5h7M4.5 8h5" stroke="#111" strokeWidth="1.7" />
            <path d="M14.5 16V5M12.8 7.5l1.7-2.5 1.7 2.5" stroke="#2c5388" />
          </AlignIcon>
        </ToggleBox>
      </Slot>
      <Slot w="w-[27px]">
        <AlignIcon>
          <path d="M4.5 9h8M4.5 12h6" stroke="#111" strokeWidth="1.7" />
          <path d="M14.5 15V5M12.8 7.5l1.7-2.5 1.7 2.5M12.8 12.5l1.7 2.5 1.7-2.5" stroke="#2c5388" />
        </AlignIcon>
      </Slot>
      <Slot w="w-[29px]">
        <Ico w={20} h={20} className="-ml-1">
          <path d="M3.5 0.5v19M17.5 0.5v19M0.5 2.5h19M0.5 18.5h19" stroke="#c5c3c0" />
          <path d="M4.5 13h7M4.5 16h7" stroke="#111" strokeWidth="1.7" />
          <path d="M14.5 4v12M12.8 13.5l1.7 2.5 1.7-2.5" stroke="#2c5388" />
        </Ico>
      </Slot>
      <Slot w="w-[6px]"><Sep /></Slot>
      <Slot w="w-[27px]"><TableGrid><path d="M1 7.5h18v4H1z" fill="#8ae234" stroke="#5fae12" /><path d="M7 5l3-4 3 4z" fill="#73d216" stroke="#4e9a06" strokeWidth=".6" /></TableGrid></Slot>
      <Slot w="w-[28px]"><TableGrid><path d="M1 11.5h18v3.5H1z" fill="#8ae234" stroke="#5fae12" /><path d="M7 16l3 4 3-4z" fill="#73d216" stroke="#4e9a06" strokeWidth=".6" /></TableGrid></Slot>
      <Slot w="w-[27px]"><TableGrid><path d="M7 3.5h8v13H7z" fill="#8ae234" stroke="#5fae12" /><path d="M5 7L1 10l4 3z" fill="#73d216" stroke="#4e9a06" strokeWidth=".6" /></TableGrid></Slot>
      <Slot w="w-[28px]"><TableGrid><path d="M6 3.5h7v13H6z" fill="#8ae234" stroke="#5fae12" /><path d="M15.5 7l4 3-4 3z" fill="#73d216" stroke="#4e9a06" strokeWidth=".6" /></TableGrid></Slot>
      <Slot w="w-[27px]"><TableGrid><path d="M0 7.5h20v4H0z" fill="#e33434" stroke="#b31717" /></TableGrid></Slot>
      <Slot w="w-[27px]"><TableGrid><path d="M6 3h8v14H6z" fill="#e33434" stroke="#b31717" /></TableGrid></Slot>
      <Slot w="w-[8px]"><Sep /></Slot>
      <Slot w="w-[27px]"><TableGrid head><path d="M1.5 3.5l16 14.5h-16z" fill="#8fd05c" stroke="#4b9a1f" /><path d="M5 11.500l4 4H5z" stroke="#4b9a1f" /></TableGrid></Slot>
      <Slot w="w-[28px]"><TableGrid head><path d="M9 8l2.5 2.5 2-1V7.5q3 1 2 4.5l3.5 5-2 1.500-4-4.500q-3.500 0-4-4z" fill="#fff" stroke="#777" /></TableGrid></Slot>
    </div>
  );
}

function VBar() {
  return <div className="h-[14px] w-px shrink-0 bg-[#a5a39f]" />;
}

function StatusBar() {
  return (
    <div className={`flex h-[17px] shrink-0 items-center border-t border-[#cbc9c6] text-[10.5px] leading-none whitespace-nowrap text-[#4f4c46] ${UI}`}>
      <span className="w-[102px] pt-[2px] pl-2 tracking-[-0.25px]">Slide 1 of 1 (Layout)</span>
      <VBar />
      <span className="w-[513px] pt-[2px] pl-[7px] tracking-[-0.36px]">TextEdit: Paragraph 1, Row 1, Column 45</span>
      <VBar />
      <span className="w-[368px] pt-[2px] pl-[6px] tracking-[-0.1px]">Default</span>
      <VBar />
      <Ico w={12} h={12} className="ml-[8px]">
        <path d="M3.5 0v7M0 3.5h7" stroke="#2a2ad0" strokeDasharray="2 .6" />
        <path d="M3.5 5.5h8v5h-8z" stroke="#222" strokeDasharray="1 1" />
      </Ico>
      <span className="ml-[4px] w-[152px] pt-[2px] tracking-[-0.1px]">-22.00 / -0.50</span>
      <Ico w={13} h={12}>
        <path d="M4.5 3.5h8v7h-8z" stroke="#222" strokeDasharray="1 1" />
        <path d="M5 1.5h7M1.5 4v7" stroke="#222" strokeDasharray="2 1" />
      </Ico>
      <span className="ml-[5px] w-[149px] pt-[2px] tracking-[-0.25px]">62.10 x 28.20</span>
      <VBar />
      <Ico w={12} h={12} className="ml-[4px] mr-[2px]">
        <path d="M1.5 1.5h8v9h-8z" stroke="#aaa" />
        <path d="M8.5 3v5M6 5.5h5M6.8 3.8l3.4 3.4M10.2 3.8L6.8 7.2" stroke="#cc1020" strokeWidth="1.1" />
      </Ico>
      <VBar />
      <div className="w-[23px]" />
      <VBar />
      <Ico w={12} h={12} className="ml-[3px] mr-[3px]">
        <path d="M6 1v10M1 6h10" stroke="#111" strokeWidth="1.4" />
        <path d="M6 0l2.3 3H3.7zM6 12l2.3-3H3.7zM0 6l3-2.3v4.6zM12 6L9 3.7v4.6z" fill="#111" />
      </Ico>
      <VBar />
      <Ico w={112} h={12} className="ml-[2px]">
        <path d="M5 6h7M103 6h7M106.5 2.5v7" stroke="#77756f" strokeWidth="1.7" />
        <path d="M17 6h80M56 2v8" stroke="#a5a39f" />
        <circle cx="43.5" cy="6" r="3.3" fill="#fff" stroke="#77756f" />
      </Ico>
      <div className="ml-[3px]"><VBar /></div>
      <span className="ml-[5px] pt-[2px]">70%</span>
    </div>
  );
}

/* ---------- floating meeting controls ---------- */

const G = "#b0b0b0";

function Ctl({ w, label, children, tone = "text-[#a9a9a9]", drop = "mt-[2px]" }: { w: string; label: string; children: ReactNode; tone?: string; drop?: string }) {
  return (
    <div className={`flex h-full flex-col items-center ${w}`}>
      <div className="flex h-[26px] items-center justify-center pt-[5px]">{children}</div>
      <span className={`text-[11px] leading-[14px] whitespace-nowrap ${drop} ${tone}`}>{label}</span>
    </div>
  );
}

function MeetingBar() {
  return (
    <div className={`absolute top-[22px] left-[462px] flex h-[45px] w-[688px] rounded-b-[4px] bg-linear-to-b from-[#27292b] to-[#1c1e20] ${DJ}`}>
      <Ctl w="w-[68px]" label="Mute">
        <Ico w={14} h={20}>
          <rect x="4" y="1" width="6" height="11.5" rx="3" fill={G} />
          <path d="M1.5 8.5v1.5a5.5 5 0 0 0 11 0V8.5M7 15v3M4 18.5h6" stroke={G} strokeWidth="1.4" />
        </Ico>
      </Ctl>
      <Ctl w="w-[69px]" label="Start Video">
        <Ico w={22} h={20}>
          <path d="M1 4.5h13v11.5H1zM15.5 8.5L21 5v11l-5.5-3.5z" fill={G} />
          <path d="M1.5 19L20 1" stroke="#27292b" strokeWidth="3" />
          <path d="M1.5 19L20 1" stroke="#e0555a" strokeWidth="1.4" />
        </Ico>
      </Ctl>
      <Ctl w="w-[68px]" label="Security">
        <Ico w={16} h={18}>
          <path d="M8 1l7 2.5v5Q15 14 8 17 1 14 1 8.5v-5z" stroke={G} strokeWidth="1.3" />
          <path d="M8 1v8H1V3.5zM8 9h7q-.5 5.5-7 8z" fill={G} />
        </Ico>
      </Ctl>
      <Ctl w="w-[106px]" label="Participants">
        <div className="flex items-start pl-[37px]">
          <Ico w={21} h={16}>
            <circle cx="7" cy="4.3" r="3.8" fill={G} />
            <path d="M0.5 15.5v-3q0-3.5 3.5-3.5h5q3.5 0 3.5 3.5v3z" fill={G} />
            <circle cx="15.5" cy="4.8" r="3" fill={G} />
            <path d="M14 15.5v-4q0-1.5-1-2.5h4q3 0 3 3v3.5z" fill={G} />
          </Ico>
          <span className="ml-[3px] text-[11px] leading-[13px] text-[#a9a9a9]">22</span>
          <Ico w={8} h={6} className="ml-[15px] mt-[4px]"><path d="M1 4.5l3-3 3 3" stroke={G} strokeWidth="1.3" /></Ico>
        </div>
      </Ctl>
      <Ctl w="w-[72px]" label="New Share" tone="text-[#23d959]" drop="mt-[3px]">
        <div className="flex items-center pl-[20px]">
          <div className="flex h-[15px] w-[20px] items-center justify-center rounded-[3px] bg-[#23d959]">
            <Ico w={8} h={10}><path d="M4 9.5V1.5M1 4.5l3-3 3 3" stroke="#1c1e20" strokeWidth="1.5" /></Ico>
          </div>
          <Ico w={8} h={6} className="ml-[11px] mt-[4px]"><path d="M1 4.5l3-3 3 3" stroke="#23d959" strokeWidth="1.4" /></Ico>
        </div>
      </Ctl>
      <Ctl w="w-[78px]" label="Pause Share">
        <Ico w={14} h={14}><path d="M2.5 0.5v13M11.5 0.5v13" stroke={G} strokeWidth="2.6" /></Ico>
      </Ctl>
      <Ctl w="w-[66px]" label="Annotate">
        <Ico w={16} h={16}><path d="M1 15l1-4L10.5 2.5l3 3L5 14zM11.5 1.5L12.5 0.7q1-.5 2 .5t.5 2l-.8 1z" fill={G} /></Ico>
      </Ctl>
      <Ctl w="w-[93px]" label="Remote Control" drop="mt-[4px]">
        <Ico w={22} h={28} className="-mt-[4px] mb-[-6px]">
          <rect x="1" y="8" width="12" height="17" rx="6" fill={G} />
          <path d="M7 12v4" stroke="#27292b" strokeWidth="1.6" />
          <path d="M7 8V6q0-3 3.5-3T14 7t3 3 3-3V3" stroke={G} strokeWidth="1.1" />
          <path d="M15.5 21.5l3 2.5 3-2.5" stroke={G} strokeWidth="1.2" />
        </Ico>
      </Ctl>
      <Ctl w="w-[68px]" label="More">
        <Ico w={18} h={4}>
          <circle cx="2.5" cy="2" r="1.7" fill={G} />
          <circle cx="9" cy="2" r="1.7" fill={G} />
          <circle cx="15.5" cy="2" r="1.7" fill={G} />
        </Ico>
      </Ctl>
    </div>
  );
}

function ShareBanner() {
  return (
    <div className={`absolute top-[67px] left-[666px] flex h-[19px] w-[280px] text-[11px] leading-none whitespace-nowrap ${DJ}`}>
      <div className="flex w-[200px] items-center bg-[#23d959] text-[#04140a]">
        <Ico w={8} h={11} className="ml-[13px]"><path d="M7.5 0.5Q4 0 3.5 5H0.8L3 10.5 6.500 6H5.300Q5 2.500 7.500 0.500z" fill="#0c5a22" /></Ico>
        <span className="ml-[11px] w-[104px] pt-px tracking-[-0.43px]">You are screen sharing</span>
        <Ico w={14} h={11} className="ml-[6px]">
          <path d="M3.5 10Q0.8 10 0.8 7.5T3.2 5Q3.5 1 7 1t3.8 4q2.4 0 2.4 2.5T10.5 10z" stroke="#16803a" strokeWidth="1.2" />
          <circle cx="7" cy="6.5" r="1.8" fill="#c8613c" />
        </Ico>
        <Ico w={10} h={11} className="ml-[15px]">
          <path d="M5 0.5l4.5 1.5v3.5Q9.5 9 5 10.8 0.5 9 0.5 5.5V2z" fill="#12662c" />
          <path d="M3 5.5l1.5 1.5L7.3 4" stroke="#23d959" />
        </Ico>
      </div>
      <div className="flex w-20 items-center rounded-br-[3px] bg-[#fb3c40] pl-2 text-white">
        <span className="w-[50px] pt-px tracking-[-0.4px]">Stop Share</span>
        <span className="ml-[6px] h-[7px] w-[7px] bg-white" />
      </div>
    </div>
  );
}

export default function App() {
  return (
    <div className="relative flex h-[900px] w-[1600px] flex-col overflow-hidden bg-[#f2f1f0]">
      <TopPanel />
      <div className="flex h-[878px]">
        <Dock />
        <div className="flex w-[1544px] flex-col">
          <MenuBar />
          <Toolbar />
          <main className="flex h-[718px] shrink-0">
            <DrawTools />
            <div className="flex h-[720px] w-[1464px] shrink-0 flex-col">
              <HRuler />
              <div className="flex h-[680px] shrink-0">
                <VRuler />
                <Canvas />
              </div>
              <div className="h-[6px] w-[1458px] shrink-0 bg-[#f38f69]" />
              <PageTabs />
            </div>
            <Sidebar />
          </main>
          <div className="h-[2px] shrink-0" />
          <FindBar />
          <TableBar />
          <StatusBar />
        </div>
      </div>
      <MeetingBar />
      <ShareBanner />
      <div className={`absolute top-[147px] left-[1413px] flex h-[25px] w-[177px] items-center bg-[#26323c] pt-px pl-1 text-[12px] text-[#e6eaee] ${DJ}`}>
        Talking:
      </div>
    </div>
  );
}
